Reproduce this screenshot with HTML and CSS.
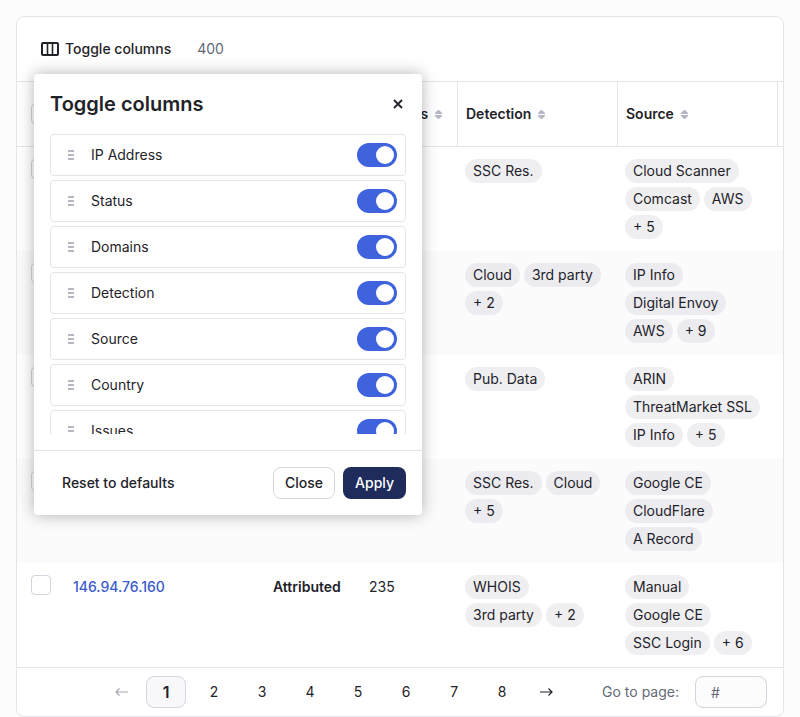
FILE: index.html
```html
<!DOCTYPE html>
<html lang="en">
<head>
<meta charset="utf-8">
<meta name="viewport" content="width=device-width, initial-scale=1">
<title>IP addresses</title>
<link rel="stylesheet" href="styles.css">
</head>
<body>
<svg class="sprite" aria-hidden="true">
  <symbol id="sort" viewBox="0 0 7 9"><path d="M0 4V3L2.400.5Q3.500-.3 4.600.5L7 3v1zM0 5v1l2.400 2.500q1.100.8 2.200 0L7 6V5z"/></symbol>
  <symbol id="grip" viewBox="0 0 6 10"><path d="M0 0h6v2H0zM0 4h6v2H0zM0 8h6v2H0z"/></symbol>
</svg>
<main class="card">
  <div class="toolbar">
    <button class="toolbar-button" type="button" aria-expanded="true">
      <svg width="18" height="14" viewBox="0 0 18 14" fill="none" stroke="currentColor" stroke-width="2" aria-hidden="true"><rect x="1" y="1" width="16" height="12" rx="1"/><path d="M6.500 1v12M11.500 1v12" stroke-width="1.600"/></svg>
      Toggle columns
    </button>
    <span class="count">400</span>

    <section class="popover" role="dialog" aria-labelledby="popover-title">
      <header class="popover-head">
        <h2 id="popover-title">Toggle columns</h2>
        <button class="dismiss" type="button" aria-label="Dismiss"><svg width="10" height="10" viewBox="0 0 10 10" fill="none" stroke="currentColor" stroke-width="1.800" aria-hidden="true"><path d="M1 1l8 8M9 1L1 9"/></svg></button>
      </header>
      <ul class="column-list">
        <li><svg class="grip" aria-hidden="true"><use href="#grip"/></svg><label for="c1">IP Address</label><input id="c1" type="checkbox" role="switch" class="switch" checked></li>
        <li><svg class="grip" aria-hidden="true"><use href="#grip"/></svg><label for="c2">Status</label><input id="c2" type="checkbox" role="switch" class="switch" checked></li>
        <li><svg class="grip" aria-hidden="true"><use href="#grip"/></svg><label for="c3">Domains</label><input id="c3" type="checkbox" role="switch" class="switch" checked></li>
        <li><svg class="grip" aria-hidden="true"><use href="#grip"/></svg><label for="c4">Detection</label><input id="c4" type="checkbox" role="switch" class="switch" checked></li>
        <li><svg class="grip" aria-hidden="true"><use href="#grip"/></svg><label for="c5">Source</label><input id="c5" type="checkbox" role="switch" class="switch" checked></li>
        <li><svg class="grip" aria-hidden="true"><use href="#grip"/></svg><label for="c6">Country</label><input id="c6" type="checkbox" role="switch" class="switch" checked></li>
        <li><svg class="grip" aria-hidden="true"><use href="#grip"/></svg><label for="c7">Issues</label><input id="c7" type="checkbox" role="switch" class="switch" checked></li>
      </ul>
      <footer class="popover-foot">
        <button class="button button-plain" type="button">Reset to defaults</button>
        <button class="button button-outline" type="button">Close</button>
        <button class="button button-primary" type="button">Apply</button>
      </footer>
    </section>
  </div>

  <table class="grid">
    <colgroup><col class="col-check"><col class="col-ip"><col class="col-small"><col class="col-small"><col class="col-tags"><col class="col-tags"><col></colgroup>
    <thead>
      <tr>
        <th class="check"><input type="checkbox" class="box" aria-label="Select all"></th>
        <th></th>
        <th></th>
        <th><span class="heading">Domains <svg class="sort" aria-hidden="true"><use href="#sort"/></svg></span></th>
        <th class="ruled"><span class="heading">Detection <svg class="sort" aria-hidden="true"><use href="#sort"/></svg></span></th>
        <th class="ruled"><span class="heading">Source <svg class="sort" aria-hidden="true"><use href="#sort"/></svg></span></th>
        <th class="ruled"></th>
      </tr>
    </thead>
    <tbody>
      <tr>
        <td class="check"><input type="checkbox" class="box" aria-label="Select row 1"></td><td></td><td></td><td></td>
        <td><div class="tags"><span>SSC Res.</span></div></td>
        <td><div class="tags"><span>Cloud Scanner</span><span>Comcast</span><span>AWS</span><span>+ 5</span></div></td><td></td>
      </tr>
      <tr>
        <td class="check"><input type="checkbox" class="box" aria-label="Select row 2"></td><td></td><td></td><td></td>
        <td><div class="tags"><span>Cloud</span><span>3rd party</span><span>+ 2</span></div></td>
        <td><div class="tags"><span>IP Info</span><span>Digital Envoy</span><span>AWS</span><span>+ 9</span></div></td><td></td>
      </tr>
      <tr>
        <td class="check"><input type="checkbox" class="box" aria-label="Select row 3"></td><td></td><td></td><td></td>
        <td><div class="tags"><span>Pub. Data</span></div></td>
        <td><div class="tags"><span>ARIN</span><span>ThreatMarket SSL</span><span>IP Info</span><span>+ 5</span></div></td><td></td>
      </tr>
      <tr>
        <td class="check"><input type="checkbox" class="box" aria-label="Select row 4"></td><td></td><td></td><td></td>
        <td><div class="tags"><span>SSC Res.</span><span>Cloud</span><span>+ 5</span></div></td>
        <td><div class="tags"><span>Google CE</span><span>CloudFlare</span><span>A Record</span></div></td><td></td>
      </tr>
      <tr>
        <td class="check"><input type="checkbox" class="box" aria-label="Select row 5"></td>
        <td><a href="#">146.94.76.160</a></td>
        <td class="status">Attributed</td>
        <td>235</td>
        <td><div class="tags"><span>WHOIS</span><span>3rd party</span><span>+ 2</span></div></td>
        <td><div class="tags"><span>Manual</span><span>Google CE</span><span>SSC Login</span><span>+ 6</span></div></td><td></td>
      </tr>
    </tbody>
  </table>

  <footer class="pager">
    <nav class="pages" aria-label="Pages">
      <button class="step" type="button" aria-label="Previous page" disabled><svg width="14" height="10" viewBox="0 0 14 10" fill="none" stroke="currentColor" stroke-width="1.200" aria-hidden="true"><path d="M13 5H1M4.500 1.500L1 5l3.500 3.500"/></svg></button>
      <button class="page current" type="button" aria-current="page">1</button>
      <button class="page" type="button">2</button>
      <button class="page" type="button">3</button>
      <button class="page" type="button">4</button>
      <button class="page" type="button">5</button>
      <button class="page" type="button">6</button>
      <button class="page" type="button">7</button>
      <button class="page" type="button">8</button>
      <button class="step" type="button" aria-label="Next page"><svg width="14" height="10" viewBox="0 0 14 10" fill="none" stroke="currentColor" stroke-width="1.200" aria-hidden="true"><path d="M1 5h12M9.500 1.500L13 5 9.500 8.500"/></svg></button>
    </nav>
    <div class="goto">
      <label for="goto">Go to page:</label>
      <input id="goto" type="text" inputmode="numeric" placeholder="#">
    </div>
  </footer>
</main>
</body>
</html>
```

FILE: styles.css
```css
:root {
  --ink: #1f2329;
  --muted: #646975;
  --line: #e4e5e9;
  --control: #d5d5df;
  --icon: #b5b7c6;
  --blue: #3f63dd;
  --navy: #1e2b5b;
}

* {
  box-sizing: border-box;
}

body {
  margin: 0;
  padding: 16px 16px 0;
  background: #fcfcfc;
  color: var(--ink);
  font-family: Inter, "Liberation Sans", sans-serif;
  font-size: 14px;
  line-height: 24px;
}

button,
input {
  margin: 0;
  font: inherit;
  color: inherit;
}

button {
  border: 0;
  padding: 0;
  background: none;
}

.sprite {
  display: none;
}

.card {
  border: 1px solid var(--line);
  border-radius: 8px;
  background: #fff;
}

/* Toolbar */
.toolbar {
  position: relative;
  display: flex;
  align-items: center;
  gap: 14px;
  height: 64px;
  padding: 0 12px;
}

.toolbar-button {
  display: flex;
  align-items: center;
  gap: 6px;
  padding: 4px 12px;
  font-weight: 500;
}

.count {
  color: var(--muted);
}

/* Column chooser */
.popover {
  position: absolute;
  z-index: 1;
  top: 57px;
  left: 17px;
  width: 388px;
  border-radius: 4px;
  background: #fff;
  box-shadow: 0 0 16px rgba(0, 0, 0, 0.3);
}

.popover-head {
  display: flex;
  align-items: center;
  justify-content: space-between;
  padding: 16px;
}

.popover-head h2 {
  margin: 0;
  font-size: 20px;
  font-weight: 600;
  line-height: 28px;
}

.dismiss {
  display: flex;
  padding: 3px;
}

.column-list {
  display: flex;
  flex-direction: column;
  gap: 4px;
  max-height: 300px;
  margin: 0 16px 16px;
  padding: 0;
  overflow-y: auto;
  scrollbar-width: none;
  list-style: none;
}

.column-list li {
  display: flex;
  flex-shrink: 0;
  align-items: center;
  gap: 8px;
  padding: 8px;
  border: 1px solid var(--line);
  border-radius: 4px;
}

.column-list label {
  flex: 1;
}

.grip {
  width: 24px;
  height: 10px;
  fill: var(--icon);
}

.switch {
  display: flex;
  align-items: center;
  justify-content: flex-end;
  width: 40px;
  height: 24px;
  padding: 3px;
  border-radius: 12px;
  background: var(--blue);
  appearance: none;
}

.switch::before {
  content: "";
  width: 18px;
  height: 18px;
  border-radius: 50%;
  background: #fff;
}

.switch:not(:checked) {
  justify-content: flex-start;
  background: var(--icon);
}

.popover-foot {
  display: flex;
  gap: 8px;
  padding: 16px;
  border-top: 1px solid var(--line);
}

.button {
  height: 32px;
  padding: 0 11px;
  border: 1px solid transparent;
  border-radius: 8px;
  font-weight: 500;
}

.button-plain {
  margin-right: auto;
}

.button-outline {
  border-color: var(--control);
}

.button-primary {
  background: var(--navy);
  color: #fff;
}

/* Table */
.grid {
  width: 100%;
  border-spacing: 0;
  table-layout: fixed;
}

.col-check {
  width: 48px;
}

.col-ip {
  width: 200px;
}

.col-small {
  width: 96px;
}

.col-tags {
  width: 160px;
}

.grid th {
  height: 66px;
  padding: 0 8px;
  border: solid var(--line);
  border-width: 1px 0;
  text-align: left;
  font-weight: 600;
}

.grid th.ruled {
  border-left-width: 1px;
}

.grid th:last-child,
.grid td:last-child {
  padding: 0;
}

.grid td {
  padding: 12px 8px;
  vertical-align: top;
}

.grid .check {
  padding-right: 14px;
  padding-left: 14px;
}

.grid tbody tr:nth-child(even) {
  background: #fbfbfb;
}

.grid a {
  color: #3a5bcc;
  font-weight: 500;
  text-decoration: none;
}

.grid .status {
  font-weight: 600;
}

.heading {
  display: flex;
  align-items: center;
  gap: 7px;
}

.sort {
  width: 7px;
  height: 9px;
  fill: var(--icon);
}

.box {
  display: block;
  width: 20px;
  height: 20px;
  border: 1px solid var(--control);
  border-radius: 4px;
  background: #fff;
  appearance: none;
}

.tags {
  display: flex;
  flex-wrap: wrap;
  gap: 4px;
}

.tags span {
  padding: 0 8px;
  border-radius: 12px;
  background: #efeff2;
}

.grid tr:nth-child(even) .tags span {
  background: #ebebf0;
}

/* Pagination */
.pager {
  display: flex;
  align-items: center;
  justify-content: flex-end;
  gap: 40px;
  padding: 8px 16px;
  border-top: 1px solid var(--line);
}

.pages {
  display: flex;
  gap: 8px;
}

.page {
  width: 40px;
  height: 32px;
  border-radius: 8px;
}

.page.current {
  border: 1px solid var(--control);
  background: #f8f8fb;
  font-size: 16px;
  font-weight: 600;
}

.step {
  display: flex;
  align-items: center;
  justify-content: center;
  width: 32px;
}

.step:disabled {
  color: #a5a5b2;
}

.goto {
  display: flex;
  align-items: center;
  gap: 16px;
  color: var(--muted);
}

.goto input {
  width: 72px;
  height: 32px;
  padding: 0 15px;
  border: 1px solid var(--control);
  border-radius: 8px;
  background: #fcfcfc;
}

.goto input::placeholder {
  color: var(--muted);
  opacity: 1;
}
```
